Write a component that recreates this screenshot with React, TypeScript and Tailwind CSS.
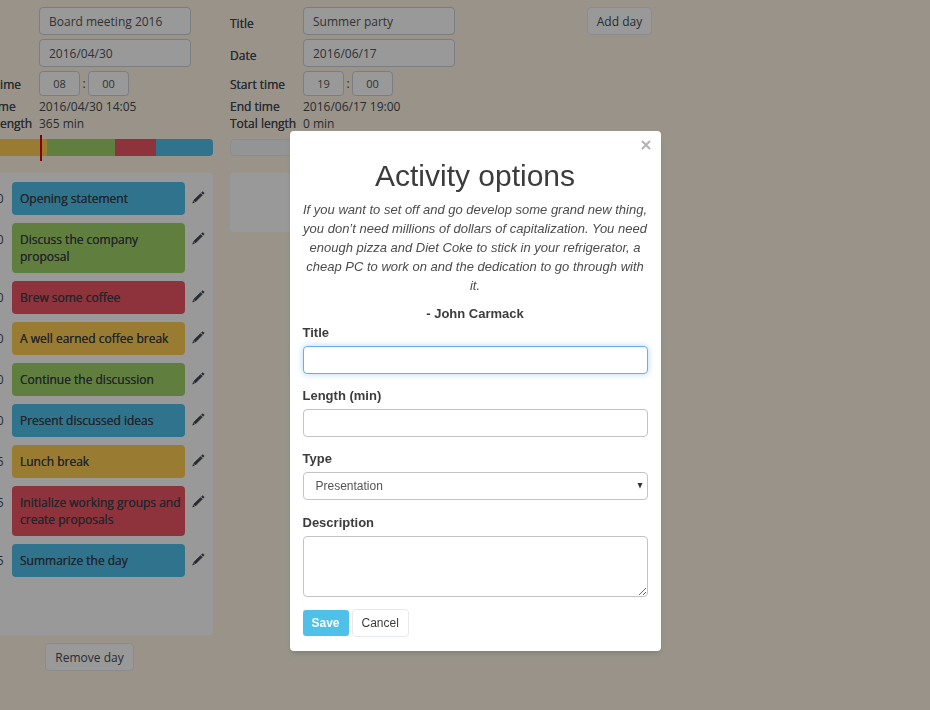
import { useId } from "react";

type Kind = "presentation" | "discussion" | "group" | "break";

const COLORS: Record<Kind, string> = {
  presentation: "bg-[#4fc1e9]",
  discussion: "bg-[#a0d468]",
  group: "bg-[#ed5565]",
  break: "bg-[#ffce54]",
};

interface Activity {
  time: string;
  title: string;
  kind: Kind;
}

interface Day {
  title: string;
  date: string;
  hour: string;
  minute: string;
  end: string;
  length: string;
  segments: { kind: Kind; size: number }[];
  activities: Activity[];
}

const DAYS: Day[] = [
  {
    title: "Board meeting 2016",
    date: "2016/04/30",
    hour: "08",
    minute: "00",
    end: "2016/04/30 14:05",
    length: "365 min",
    segments: [
      { kind: "break", size: 81 },
      { kind: "discussion", size: 68 },
      { kind: "group", size: 41 },
      { kind: "presentation", size: 57 },
    ],
    activities: [
      { time: "08:00", title: "Opening statement", kind: "presentation" },
      { time: "08:30", title: "Discuss the company proposal", kind: "discussion" },
      { time: "09:10", title: "Brew some coffee", kind: "group" },
      { time: "09:20", title: "A well earned coffee break", kind: "break" },
      { time: "09:40", title: "Continue the discussion", kind: "discussion" },
      { time: "10:40", title: "Present discussed ideas", kind: "presentation" },
      { time: "11:15", title: "Lunch break", kind: "break" },
      { time: "12:15", title: "Initialize working groups and create proposals", kind: "group" },
      { time: "13:35", title: "Summarize the day", kind: "presentation" },
    ],
  },
  {
    title: "Summer party",
    date: "2016/06/17",
    hour: "19",
    minute: "00",
    end: "2016/06/17 19:00",
    length: "0 min",
    segments: [],
    activities: [],
  },
];

const FIELD = "rounded border border-[#ccd1d9] bg-white text-[#555] outline-none";
const BUTTON = "h-7 rounded border border-[#e6e9ed] bg-white px-[9px]";
const STRONG = "font-medium [text-shadow:0_0_0_currentColor]";

function Pencil() {
  return (
    <svg viewBox="0 0 14 14" className="h-[13px] w-[13px]" fill="#434a54" aria-hidden="true">
      <path d="M0.3 13.4 1.2 10.6 3.1 12.5Z" />
      <path d="M1.9 10 9.2 2.9 10.9 4.6 3.7 11.8Z" stroke="#434a54" strokeWidth="0.9" />
      <path d="M10 2 11.2 .8Q11.6 .4 12 .8L13 1.8Q13.4 2.2 13 2.6L11.8 3.8Z" stroke="#434a54" strokeWidth="0.3" />
    </svg>
  );
}

function DayColumn({ day, marker }: { day: Day; marker: boolean }) {
  const id = useId();
  return (
    <section className="flex w-[247px] shrink-0 flex-col">
      <div className="grid grid-cols-[73px_1fr] items-center">
        <label htmlFor={id + "t"} className={STRONG}>Title</label>
        <input id={id + "t"} defaultValue={day.title} className={`${FIELD} mb-1 h-7 w-[152px] px-[9px]`} />
        <label htmlFor={id + "d"} className={STRONG}>Date</label>
        <input id={id + "d"} defaultValue={day.date} className={`${FIELD} mb-1 h-7 w-[152px] px-[9px]`} />
        <label htmlFor={id + "h"} className={STRONG}>Start time</label>
        <div className="mb-[2px] flex items-center">
          <input id={id + "h"} defaultValue={day.hour} className={`${FIELD} h-[25px] w-[41px] text-center text-[11px]`} />
          <span className="w-2 text-center">:</span>
          <input aria-label="Start minute" defaultValue={day.minute} className={`${FIELD} h-[25px] w-[41px] text-center text-[11px]`} />
        </div>
        <span className={STRONG}>End time</span>
        <span>{day.end}</span>
        <span className={`${STRONG} whitespace-nowrap`}>Total length</span>
        <span>{day.length}</span>
      </div>
      <div className="relative mt-[7px] h-[17px] rounded border border-[#e6e9ed] bg-[#f5f7fa]">
        <div className="-m-px flex h-[17px] overflow-hidden rounded">
          {day.segments.map((s) => (
            <div key={s.kind} className={COLORS[s.kind]} style={{ flexGrow: s.size }} />
          ))}
        </div>
        {marker && <div className="absolute -top-[5px] left-[30%] -ml-px h-[26px] w-[2px] bg-[#e00000]" />}
      </div>
      <ul className="mt-[17px] rounded bg-white pt-[9px] pr-2 pb-[50px] pl-[7px]">
        {day.activities.map((a) => (
          <li key={a.title} className="mb-2 flex items-start">
            <span className="w-[39px] shrink-0 pt-2">{a.time}</span>
            <div className={`${COLORS[a.kind]} ${STRONG} flex-1 rounded py-2 pr-1 pl-2 text-[#3b4049]`}>{a.title}</div>
            <button aria-label={`Edit ${a.title}`} className="mt-[9px] ml-[7px] shrink-0">
              <Pencil />
            </button>
          </li>
        ))}
      </ul>
      {day.activities.length > 0 && (
        <div className="mt-2 text-center">
          <button className={BUTTON}>Remove day</button>
        </div>
      )}
    </section>
  );
}

const INPUT = "block w-full rounded border border-[#c4c4c4] bg-white px-3 text-[12px] text-[#555] outline-none";
const LABEL = "mb-1 block text-[13px] leading-[19px] font-bold";

function ActivityDialog() {
  return (
    <div className="fixed inset-0 flex items-start justify-center bg-black/40 pt-[131px] pl-5 font-['Liberation_Sans',Arial,sans-serif] text-[13px] leading-[19px] text-[#3c3c3c]">
      <div role="dialog" aria-labelledby="dialog-title" className="relative w-[371px] rounded bg-white px-[13px] pt-7 pb-[13px] shadow-md">
        <button aria-label="Close" className="absolute top-2 right-[9px] p-px text-[#b4b4b4]">
          <svg viewBox="0 0 10 10" className="h-[10px] w-[10px]" stroke="currentColor" strokeWidth="2" aria-hidden="true">
            <path d="M1 1 9 9M9 1 1 9" />
          </svg>
        </button>
        <h1 id="dialog-title" className="text-center text-[30px] leading-[33px]">Activity options</h1>
        <p className="mt-2 text-center text-[#4c4c4c] italic">
          If you want to set off and go develop some grand new thing, you don’t need millions of dollars of
          capitalization. You need enough pizza and Diet Coke to stick in your refrigerator, a cheap PC to work on and
          the dedication to go through with it.
        </p>
        <p className="mt-[9px] text-center font-bold">- John Carmack</p>
        <form>
          <label htmlFor="title" className={LABEL}>Title</label>
          <input
            id="title"
            className="mb-3 block h-7 w-full rounded border border-[#66afe9] bg-white px-3 text-[12px] shadow-[0_0_6px_rgba(102,175,233,0.5)] outline-none"
          />
          <label htmlFor="length" className={LABEL}>Length (min)</label>
          <input id="length" className={`${INPUT} mb-3 h-7`} />
          <label htmlFor="type" className={LABEL}>Type</label>
          <div className="relative mb-[13px]">
            <select id="type" className={`${INPUT} h-7 appearance-none`}>
              <option>Presentation</option>
              <option>Discussion</option>
              <option>Group work</option>
              <option>Break</option>
            </select>
            <svg viewBox="0 0 6 6" className="pointer-events-none absolute top-[11px] right-[5px] h-[6px] w-[6px]" fill="#333" aria-hidden="true">
              <path d="M0.5 0H5.5L3 5.6Z" />
            </svg>
          </div>
          <label htmlFor="description" className={LABEL}>Description</label>
          <textarea id="description" className={`${INPUT} h-[61px] resize`} />
          <div className="mt-3 flex items-center gap-[3px] pb-px text-[12px]">
            <button type="button" className="h-[26px] rounded-[3px] bg-[#4fc1e9] px-[9px] font-bold text-white">Save</button>
            <button type="button" className={BUTTON}>Cancel</button>
          </div>
        </form>
      </div>
    </div>
  );
}

export default function App() {
  return (
    <div className="min-h-screen overflow-hidden bg-[#fff6e6] font-['Open_Sans',sans-serif] text-[12px] leading-[17px] text-[#434a54]">
      <main className="-ml-[34px] flex items-start gap-[17px] pt-[7px]">
        {DAYS.map((day, i) => (
          <DayColumn key={day.title} day={day} marker={i === 0} />
        ))}
        <div className="w-[247px] shrink-0 pl-1 text-center">
          <button className={BUTTON}>Add day</button>
        </div>
      </main>
      <ActivityDialog />
    </div>
  );
}
